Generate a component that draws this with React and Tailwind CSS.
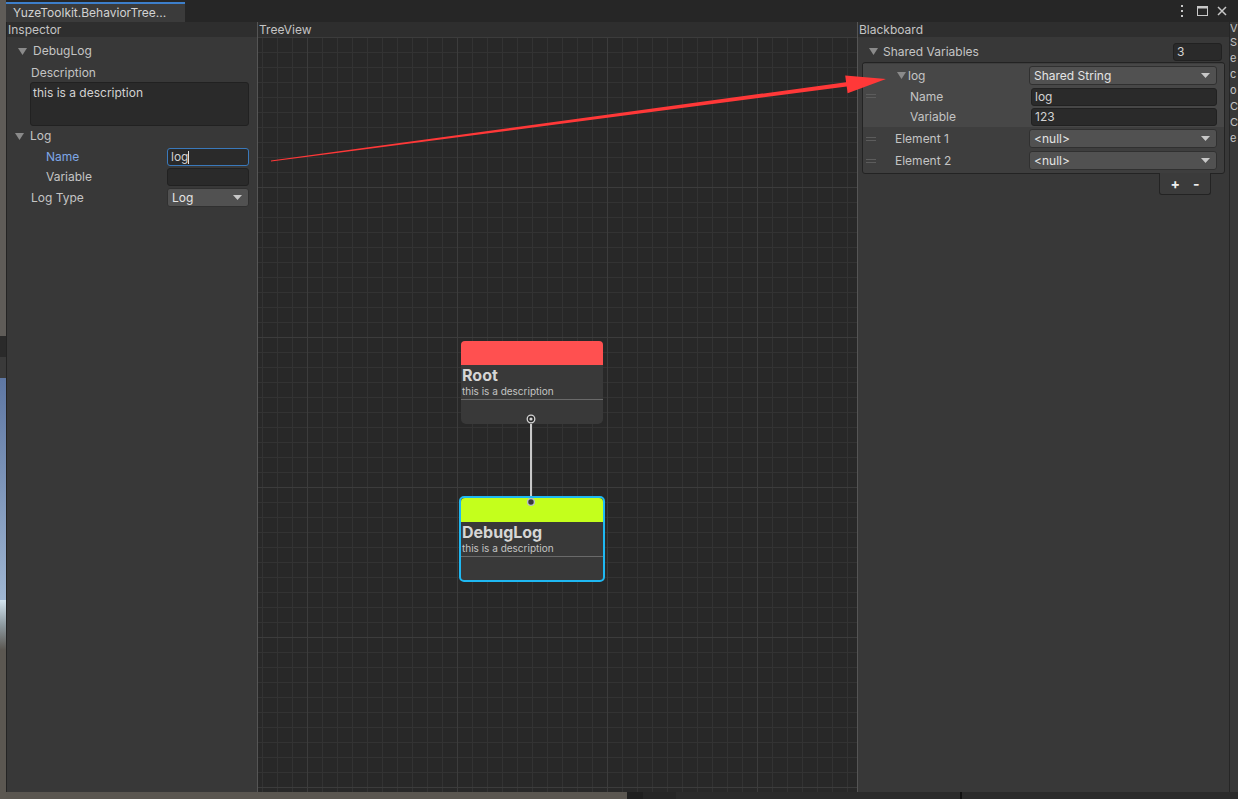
import React from 'react';

const Tri = () => (
  <svg width="9" height="7" viewBox="0 0 9 7" className="shrink-0">
    <path d="M0 0H9L4.5 7Z" fill="#8a8a8a" />
  </svg>
);

const Caret = () => (
  <svg width="9" height="5" viewBox="0 0 9 5" className="shrink-0">
    <path d="M0 0H9L4.5 5Z" fill="#c8c8c8" />
  </svg>
);

const Handle = () => (
  <div className="w-[10px] flex flex-col gap-[2px]">
    <div className="h-px bg-[#5c5c5c]" />
    <div className="h-px bg-[#5c5c5c]" />
  </div>
);

function Input({ value, focus, className = '' }) {
  return (
    <div
      className={`h-[18px] rounded-[3px] border px-[3px] text-[12px] leading-[16px] text-[#d2d2d2] flex items-center ${
        focus ? 'border-[#3a79bb] bg-[#2a2a2a]' : 'border-[#212121] bg-[#2a2a2a]'
      } ${className}`}
    >
      {value}
      {focus && <span className="w-px h-[13px] bg-[#e0e0e0]" />}
    </div>
  );
}

function Dropdown({ value, className = '' }) {
  return (
    <div
      className={`h-[19px] rounded-[3px] border border-[#303030] bg-[#515151] pl-[4px] pr-[6px] flex items-center justify-between text-[12px] text-[#e4e4e4] ${className}`}
    >
      <span>{value}</span>
      <Caret />
    </div>
  );
}

function Node({ color, title, selected, children }) {
  return (
    <div
      className={`relative flex flex-col rounded-[5px] ${
        selected ? 'border-2 border-[#1fb8f2] bg-[#393939]' : 'bg-[#393939]'
      }`}
    >
      <div className={`h-[24px] rounded-t-[4px] ${color}`} />
      <div className="h-[20px] pl-px text-[16px] leading-[20px] font-bold text-[#d6d6d6]">{title}</div>
      <div className="h-[12px] pl-px text-[10px] leading-[12px] text-[#c4c4c4]">this is a description</div>
      <div className="h-[2px]" />
      <div className="h-px bg-[#6a6a6a]" />
      <div className={selected ? 'h-[23px]' : 'h-[24px]'} />
      {children}
    </div>
  );
}

export default function App() {
  return (
    <div className="relative w-[1238px] h-[799px] overflow-hidden flex bg-[#5a5650] font-[family-name:Inter,'Noto_Sans',sans-serif] text-[12px] text-[#c4c4c4]">
      {/* scene view sliver on the left */}
      <div className="w-[6px] shrink-0 flex flex-col">
        <div className="h-[336px] bg-[#5f5c58]" />
        <div className="h-[21px] bg-[#2a2a2a]" />
        <div className="h-[21px] bg-[#3a3a3a]" />
        <div className="h-[222px] bg-[linear-gradient(#5e77a3,#9fb6d2)]" />
        <div className="h-[50px] bg-[linear-gradient(#d3e4ef,#8e9aa0,#5b5751)]" />
        <div className="flex-1 bg-[#5b5751]" />
      </div>

      <div className="flex-1 flex flex-col">
        {/* window */}
        <div className="h-[792px] flex flex-col bg-[#383838]">
          {/* tab bar */}
          <div className="h-[22px] shrink-0 flex bg-[#262626]">
            <div className="mt-[2px] w-[179px] border-t-2 border-[#3d7fcb] bg-[#3b3b3b] pl-[7px] text-[12px] leading-[18px] text-[#d2d2d2]">
              YuzeToolkit.BehaviorTree...
            </div>
            <div className="flex-1" />
            <div className="flex items-center gap-[7px] pr-[11px] text-[#c8c8c8]">
              <svg width="4" height="12" viewBox="0 0 4 12">
                <rect x="1" y="0" width="2" height="2" fill="#c8c8c8" />
                <rect x="1" y="5" width="2" height="2" fill="#c8c8c8" />
                <rect x="1" y="10" width="2" height="2" fill="#c8c8c8" />
              </svg>
              <svg width="11" height="10" viewBox="0 0 11 10" className="ml-[6px]">
                <rect x="0.5" y="0.5" width="10" height="9" fill="none" stroke="#c8c8c8" />
                <rect x="0" y="0" width="11" height="2.5" fill="#c8c8c8" />
              </svg>
              <svg width="10" height="10" viewBox="0 0 10 10" className="ml-[2px]">
                <path d="M1 1L9 9M9 1L1 9" stroke="#c8c8c8" strokeWidth="1.5" />
              </svg>
            </div>
          </div>

          <div className="flex-1 flex">
            {/* Inspector */}
            <div className="w-[251px] shrink-0 flex flex-col border-l border-[#232323] bg-[#383838]">
              <div className="h-[15px] bg-[#2e2e2e] pl-px leading-[15px]">Inspector</div>
              <div className="flex flex-col pt-[5px]">
                <div className="h-[18px] flex items-center gap-[6px] pl-[11px]">
                  <Tri />
                  <span>DebugLog</span>
                </div>
                <div className="h-[18px] mt-[4px] flex items-center pl-[24px]">Description</div>
                <div className="ml-[23px] w-[219px] h-[44px] rounded-[3px] border border-[#212121] bg-[#2a2a2a] px-[2px] pt-px text-[#d2d2d2]">
                  this is a description
                </div>
                <div className="h-[18px] mt-px flex items-center gap-[6px] pl-[8px]">
                  <Tri />
                  <span>Log</span>
                </div>
                <div className="h-[18px] mt-[3px] flex items-center pl-[39px] pr-[8px]">
                  <span className="flex-1 text-[#7ea7e6]">Name</span>
                  <Input value="log" focus className="w-[82px]" />
                </div>
                <div className="h-[18px] mt-[2px] flex items-center pl-[39px] pr-[8px]">
                  <span className="flex-1">Variable</span>
                  <Input value="" className="w-[82px]" />
                </div>
                <div className="h-[19px] mt-[2px] flex items-center pl-[24px] pr-[8px]">
                  <span className="flex-1">Log Type</span>
                  <Dropdown value="Log" className="w-[82px]" />
                </div>
              </div>
            </div>

            {/* TreeView */}
            <div className="w-[601px] shrink-0 flex flex-col border-x border-[#555555]">
              <div className="h-[15px] bg-[#2e2e2e] pl-px leading-[15px]">TreeView</div>
              <div className="relative flex-1 overflow-hidden bg-[#282828]">
                <svg className="absolute inset-0" width="100%" height="100%">
                  <defs>
                    <pattern id="minor" x="4" y="0" width="15" height="15" patternUnits="userSpaceOnUse">
                      <path d="M0.5 0V15M0 0.5H15" stroke="#333333" strokeWidth="1" />
                    </pattern>
                    <pattern id="major" x="49" y="0" width="150" height="150" patternUnits="userSpaceOnUse">
                      <path d="M0.5 0V150M0 0.5H150" stroke="#3c3c3c" strokeWidth="1" />
                    </pattern>
                  </defs>
                  <rect width="100%" height="100%" fill="url(#minor)" />
                  <rect width="100%" height="100%" fill="url(#major)" />
                </svg>

                {/* edge */}
                <div className="absolute left-[272px] top-[386px] w-[2px] h-[74px] bg-[#c8c8c8]" />

                <div className="absolute left-[203px] top-[304px] w-[142px]">
                  <Node color="bg-[#ff5050]" title="Root">
                    <svg className="absolute left-[65px] top-[73px]" width="10" height="10" viewBox="0 0 10 10">
                      <circle cx="5" cy="5" r="3.8" fill="#2a2a2a" stroke="#d4d4d4" strokeWidth="1.3" />
                      <circle cx="5" cy="5" r="1.6" fill="#d4d4d4" />
                    </svg>
                  </Node>
                </div>

                <div className="absolute left-[201px] top-[459px] w-[146px]">
                  <Node color="bg-[#c4ff1c]" title="DebugLog" selected>
                    <svg className="absolute left-[65px] top-[-1px]" width="10" height="10" viewBox="0 0 10 10">
                      <circle cx="5" cy="5" r="3.4" fill="#3a3a3a" stroke="#b9c2c6" strokeWidth="1.4" />
                    </svg>
                  </Node>
                </div>
              </div>
            </div>

            {/* Blackboard */}
            <div className="w-[372px] shrink-0 flex flex-col border-r border-[#262626] bg-[#383838]">
              <div className="h-[15px] bg-[#2e2e2e] pl-px leading-[15px]">Blackboard</div>
              <div className="flex flex-col pt-[5px]">
                <div className="h-[19px] flex items-center pl-[11px] pr-[7px]">
                  <Tri />
                  <span className="ml-[5px] flex-1">Shared Variables</span>
                  <Input value="3" className="w-[49px]" />
                </div>
                <div className="mx-[4px] mt-px h-[112px] rounded-[3px] border border-[#232323] bg-[#3e3e3e] flex flex-col">
                  <div className="mt-px flex bg-[#474747] pl-[3px]">
                    <div className="flex items-center">
                      <Handle />
                    </div>
                    <div className="flex-1 flex flex-col pt-[2px] pb-px pr-[7px]">
                      <div className="h-[19px] flex items-center">
                        <span className="ml-[21px]">
                          <Tri />
                        </span>
                        <span className="ml-[2px] flex-1">log</span>
                        <Dropdown value="Shared String" className="w-[188px]" />
                      </div>
                      <div className="h-[18px] mt-[3px] flex items-center">
                        <span className="ml-[34px] flex-1">Name</span>
                        <Input value="log" className="w-[186px]" />
                      </div>
                      <div className="h-[18px] mt-[2px] flex items-center">
                        <span className="ml-[34px] flex-1">Variable</span>
                        <Input value="123" className="w-[186px]" />
                      </div>
                    </div>
                  </div>
                  <div className="h-[19px] mt-[2px] flex items-center pl-[3px] pr-[7px]">
                    <Handle />
                    <span className="ml-[19px] flex-1">Element 1</span>
                    <Dropdown value="<null>" className="w-[188px]" />
                  </div>
                  <div className="h-[19px] mt-[3px] flex items-center pl-[3px] pr-[7px]">
                    <Handle />
                    <span className="ml-[19px] flex-1">Element 2</span>
                    <Dropdown value="<null>" className="w-[188px]" />
                  </div>
                </div>
                <div className="self-end mr-[18px] -mt-px w-[52px] h-[22px] rounded-b-[3px] border border-t-0 border-[#232323] bg-[#3b3b3b] flex items-center justify-center gap-[13px] text-[14px] font-bold text-[#eeeeee]">
                  <span>+</span>
                  <span>-</span>
                </div>
              </div>
            </div>

            {/* neighbouring panel, only its edge is visible */}
            <div className="flex-1 overflow-hidden bg-[#383838]">
              <div className="text-[11px] leading-[16px]">
                <div className="leading-[12px]">V</div>
                <div>S</div>
                <div>e</div>
                <div>c</div>
                <div>o</div>
                <div>C</div>
                <div>C</div>
                <div>e</div>
              </div>
            </div>
          </div>
        </div>

        {/* strip below window */}
        <div className="flex-1 flex">
          <div className="w-[621px] bg-[#5a5650]" />
          <div className="w-[16px] bg-[#1f1f1f]" />
          <div className="w-[33px] bg-[#262626]" />
          <div className="w-[284px] bg-[#2b2b2b]" />
          <div className="w-[2px] bg-[#111111]" />
          <div className="flex-1 bg-[#2b2b2b]" />
        </div>
      </div>

      {/* red annotation arrow */}
      <svg className="absolute inset-0 pointer-events-none" width="1238" height="799" viewBox="0 0 1238 799">
        <polygon
          points="271,160.4 846.1,82.2 845.2,75.4 886,79 847.6,93.2 846.7,86.4 271,161.6"
          fill="#ff3838"
        />
      </svg>
    </div>
  );
}
